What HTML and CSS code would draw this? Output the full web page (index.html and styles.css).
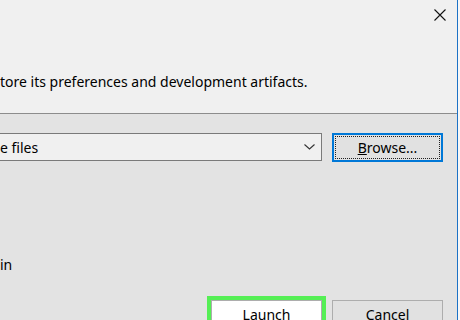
FILE: index.html
```html
<!DOCTYPE html>
<html lang="en">
<head>
    <meta charset="UTF-8">
    <title>Workspace Launcher</title>
    <link rel="stylesheet" href="styles.css">
</head>
<body>
    <div class="dialog">
        <!-- Top section with close button and description -->
        <div class="head">
            <div class="titlebar">
                <svg class="close" width="12" height="12" viewBox="0 0 12 12">
                    <path d="M0.5 0.5 L11.5 11.5 M11.5 0.5 L0.5 11.5" stroke="#111" stroke-width="1.1" fill="none"/>
                </svg>
            </div>
            <p class="desc">tore its preferences and development artifacts.</p>
        </div>

        <!-- Workspace picker -->
        <div class="body">
            <div class="workspace-row">
                <div class="combo">
                    <span>e files</span>
                    <svg width="11" height="6" viewBox="0 0 11 6">
                        <path d="M0.5 0.5 L5.5 5 L10.5 0.5" stroke="#333" stroke-width="1.1" fill="none"/>
                    </svg>
                </div>
                <button class="btn browse"><u>B</u>rowse...</button>
            </div>

            <p class="remember">in</p>

            <div class="actions">
                <button class="btn launch">Launch</button>
                <button class="btn">Cancel</button>
            </div>
        </div>
    </div>
</body>
</html>
```

FILE: styles.css
```css
body {
    margin: 0;
    background-color: #f7f7f7;
    font-family: 'Noto Sans', sans-serif;
    font-size: 14px;
    color: #000;
    overflow: hidden;
}

.dialog {
    width: 457px;
    height: 320px;
    border-right: 1px solid #1c72c6;
    display: flex;
    flex-direction: column;
}

/* Upper part */
.head {
    flex-shrink: 0;
    height: 113px;
    background-color: #f0f0f0;
    border-bottom: 1px solid #8c8c8c;
}

.titlebar {
    height: 30px;
    display: flex;
    justify-content: flex-end;
    align-items: center;
    padding-right: 11px;
}

.desc {
    margin: 42px 0 0;
    line-height: 19px;
    white-space: nowrap;
}

/* Lower part */
.body {
    flex: 1;
    min-height: 0;
    background-color: #e3e3e3;
    padding: 19px 14px 0 0;
    display: flex;
    flex-direction: column;
}

.workspace-row {
    flex-shrink: 0;
    display: flex;
    align-items: flex-start;
    gap: 10px;
}

.combo {
    flex: 1;
    height: 28px;
    box-sizing: border-box;
    border: 1px solid #7a7a7a;
    border-left: none;
    background-color: #f0f0f0;
    display: flex;
    align-items: center;
    justify-content: space-between;
    padding-right: 6px;
}

.btn {
    width: 111px;
    height: 29px;
    box-sizing: border-box;
    border: 1px solid #adadad;
    background-color: #e1e1e1;
    font: inherit;
    color: #000;
    padding: 0;
}

.browse {
    border-color: #0078d7;
    box-shadow: inset 0 0 0 1px #0078d7;
    outline: 1px dotted #222;
    outline-offset: -4px;
}

.remember {
    flex-shrink: 0;
    margin: 93px 0 0;
    line-height: 19px;
}

.actions {
    flex-shrink: 0;
    margin-top: 26px;
    display: flex;
    justify-content: flex-end;
    gap: 10px;
}

.launch {
    background-color: #fff;
    outline: 4px solid #55ef55;
}
```
